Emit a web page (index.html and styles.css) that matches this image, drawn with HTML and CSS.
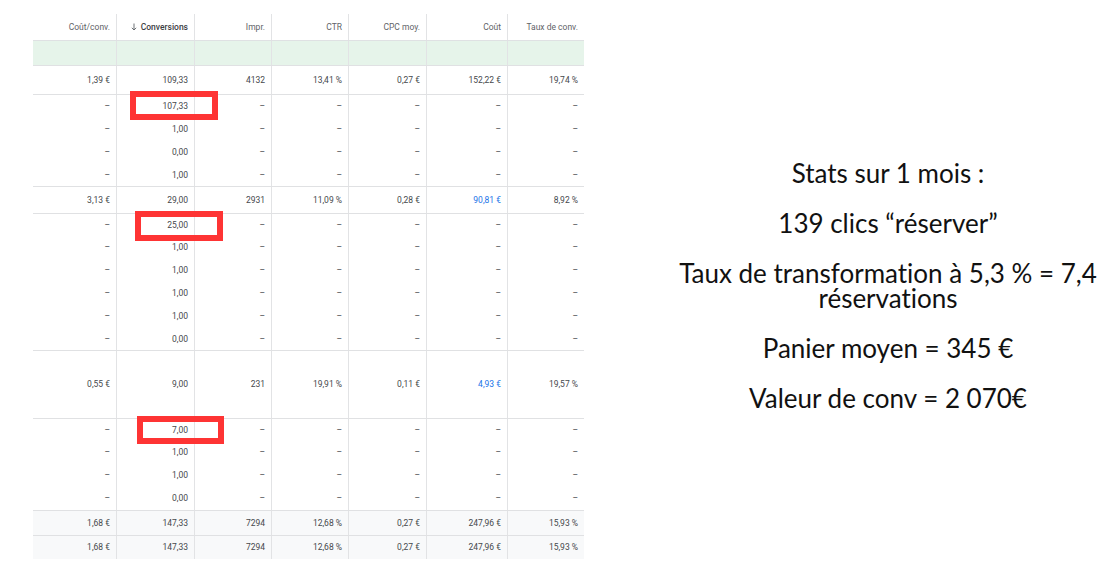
FILE: index.html
```html
<!DOCTYPE html>
<html lang="fr">
<head>
<meta charset="utf-8">
<title>Stats conversions</title>
<link rel="stylesheet" href="styles.css">
</head>
<body>
<div class="page">
  <section class="report">
    <div class="grid">
      <div class="row head">
        <div class="cell">Coût/conv.</div>
        <div class="cell sorted"><svg class="arrow" width="6" height="8" viewBox="0 0 6 8"><path d="M3 0.5V7M0.8 4.8L3 7L5.2 4.8" fill="none" stroke="#5f6368" stroke-width="0.9"/></svg>Conversions</div>
        <div class="cell">Impr.</div>
        <div class="cell">CTR</div>
        <div class="cell">CPC moy.</div>
        <div class="cell">Coût</div>
        <div class="cell">Taux de conv.</div>
      </div>
      <div class="row band">
        <div class="cell"></div><div class="cell"></div><div class="cell"></div><div class="cell"></div><div class="cell"></div><div class="cell"></div><div class="cell"></div>
      </div>

      <div class="row group g1">
        <div class="cell">1,39 €</div><div class="cell">109,33</div><div class="cell">4132</div><div class="cell">13,41 %</div><div class="cell">0,27 €</div><div class="cell">152,22 €</div><div class="cell">19,74 %</div>
      </div>
      <div class="row sub first">
        <div class="cell">–</div><div class="cell">107,33</div><div class="cell">–</div><div class="cell">–</div><div class="cell">–</div><div class="cell">–</div><div class="cell">–</div>
      </div>
      <div class="row sub">
        <div class="cell">–</div><div class="cell">1,00</div><div class="cell">–</div><div class="cell">–</div><div class="cell">–</div><div class="cell">–</div><div class="cell">–</div>
      </div>
      <div class="row sub">
        <div class="cell">–</div><div class="cell">0,00</div><div class="cell">–</div><div class="cell">–</div><div class="cell">–</div><div class="cell">–</div><div class="cell">–</div>
      </div>
      <div class="row sub">
        <div class="cell">–</div><div class="cell">1,00</div><div class="cell">–</div><div class="cell">–</div><div class="cell">–</div><div class="cell">–</div><div class="cell">–</div>
      </div>

      <div class="row group g2">
        <div class="cell">3,13 €</div><div class="cell">29,00</div><div class="cell">2931</div><div class="cell">11,09 %</div><div class="cell">0,28 €</div><div class="cell link">90,81 €</div><div class="cell">8,92 %</div>
      </div>
      <div class="row sub tight first">
        <div class="cell">–</div><div class="cell">25,00</div><div class="cell">–</div><div class="cell">–</div><div class="cell">–</div><div class="cell">–</div><div class="cell">–</div>
      </div>
      <div class="row sub tight">
        <div class="cell">–</div><div class="cell">1,00</div><div class="cell">–</div><div class="cell">–</div><div class="cell">–</div><div class="cell">–</div><div class="cell">–</div>
      </div>
      <div class="row sub tight">
        <div class="cell">–</div><div class="cell">1,00</div><div class="cell">–</div><div class="cell">–</div><div class="cell">–</div><div class="cell">–</div><div class="cell">–</div>
      </div>
      <div class="row sub tight">
        <div class="cell">–</div><div class="cell">1,00</div><div class="cell">–</div><div class="cell">–</div><div class="cell">–</div><div class="cell">–</div><div class="cell">–</div>
      </div>
      <div class="row sub tight">
        <div class="cell">–</div><div class="cell">1,00</div><div class="cell">–</div><div class="cell">–</div><div class="cell">–</div><div class="cell">–</div><div class="cell">–</div>
      </div>
      <div class="row sub tight">
        <div class="cell">–</div><div class="cell">0,00</div><div class="cell">–</div><div class="cell">–</div><div class="cell">–</div><div class="cell">–</div><div class="cell">–</div>
      </div>

      <div class="row group g3">
        <div class="cell">0,55 €</div><div class="cell">9,00</div><div class="cell">231</div><div class="cell">19,91 %</div><div class="cell">0,11 €</div><div class="cell link">4,93 €</div><div class="cell">19,57 %</div>
      </div>
      <div class="row sub first">
        <div class="cell">–</div><div class="cell">7,00</div><div class="cell">–</div><div class="cell">–</div><div class="cell">–</div><div class="cell">–</div><div class="cell">–</div>
      </div>
      <div class="row sub">
        <div class="cell">–</div><div class="cell">1,00</div><div class="cell">–</div><div class="cell">–</div><div class="cell">–</div><div class="cell">–</div><div class="cell">–</div>
      </div>
      <div class="row sub">
        <div class="cell">–</div><div class="cell">1,00</div><div class="cell">–</div><div class="cell">–</div><div class="cell">–</div><div class="cell">–</div><div class="cell">–</div>
      </div>
      <div class="row sub">
        <div class="cell">–</div><div class="cell">0,00</div><div class="cell">–</div><div class="cell">–</div><div class="cell">–</div><div class="cell">–</div><div class="cell">–</div>
      </div>

      <div class="row total t1">
        <div class="cell">1,68 €</div><div class="cell">147,33</div><div class="cell">7294</div><div class="cell">12,68 %</div><div class="cell">0,27 €</div><div class="cell">247,96 €</div><div class="cell">15,93 %</div>
      </div>
      <div class="row total t2">
        <div class="cell">1,68 €</div><div class="cell">147,33</div><div class="cell">7294</div><div class="cell">12,68 %</div><div class="cell">0,27 €</div><div class="cell">247,96 €</div><div class="cell">15,93 %</div>
      </div>
    </div>
    <span class="mark mark-1"></span>
    <span class="mark mark-2"></span>
    <span class="mark mark-3"></span>
  </section>

  <section class="notes">
    <p>Stats sur 1 mois :</p>
    <p>139 clics “réserver”</p>
    <p>Taux de transformation à 5,3 % = 7,4 réservations</p>
    <p>Panier moyen = 345 €</p>
    <p>Valeur de conv = 2 070€</p>
  </section>
</div>
</body>
</html>
```

FILE: styles.css
```css
* { box-sizing: border-box; }

html, body {
  margin: 0;
  padding: 0;
  background: #ffffff;
}

.page {
  display: flex;
  width: 1115px;
  height: 572px;
}

/* ---------- report table ---------- */
.report {
  position: relative;
  flex: 0 0 551px;
  margin: 14px 0 0 33px;
  align-self: flex-start;
  font-family: Roboto, "Liberation Sans", sans-serif;
  font-size: 8.5px;
  color: #45484c;
}

.row {
  display: grid;
  grid-template-columns: 84px 78px 77px 77px 78px 81px 76px;
}

.cell {
  display: flex;
  align-items: center;
  justify-content: flex-end;
  padding-right: 6px;
  border-right: 1px solid #e2e3e5;
  white-space: nowrap;
}

.cell:last-child { border-right: none; }

.head { height: 26px; color: #5f6368; }
.head .sorted { color: #3c4043; font-weight: 500; }
.arrow { margin-right: 4px; }

.band {
  height: 25px;
  background: #e6f4ea;
  border-top: 1px solid #dfe1e3;
}

.group { border-top: 1px solid #e0e1e3; }
.g1 { height: 29px; }
.g2 { height: 27px; }
.g3 { height: 68px; }

.sub { height: 23px; }
.sub.tight { height: 22.83px; }
.sub.first { border-top: 1px solid #e0e1e3; }

.link { color: #1a73e8; }

.total {
  background: #f8f9fa;
  border-top: 1px solid #e0e1e3;
}
.t1 { height: 25px; }
.t2 { height: 24px; }

/* annotations drawn over the table */
.mark {
  position: absolute;
  border: 6px solid #fe3434;
}
.mark-1 { left: 97px; top: 77px; width: 88px; height: 29px; }
.mark-2 { left: 102px; top: 197px; width: 88px; height: 30px; }
.mark-3 { left: 104px; top: 402px; width: 87px; height: 28px; }

/* ---------- notes ---------- */
.notes {
  flex: 1;
  padding-left: 77px;
  display: flex;
  flex-direction: column;
  justify-content: center;
  gap: 25px;
  text-align: center;
  font-family: Lato, "Noto Sans", sans-serif;
  font-size: 26px;
  line-height: 25px;
  font-variant-ligatures: none;
  color: #111111;
}

.notes p { margin: 0; }
```
